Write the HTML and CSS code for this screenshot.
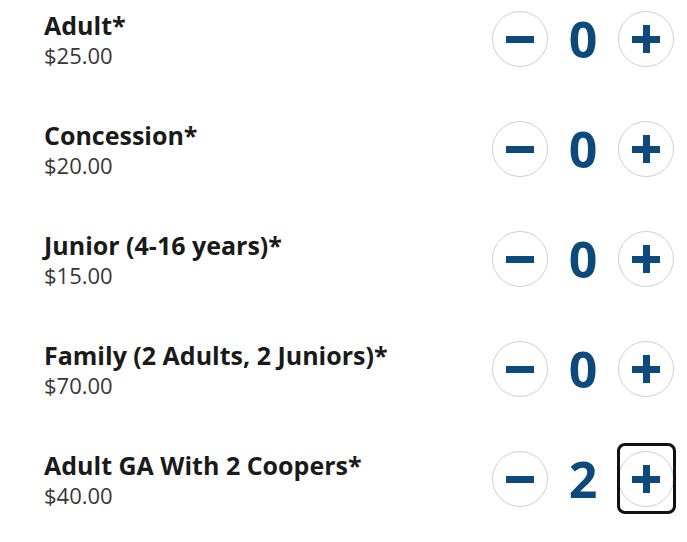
FILE: index.html
```html
<!DOCTYPE html>
<html>
<head>
<meta charset="utf-8">
<link rel="stylesheet" href="styles.css">
</head>
<body>
<div class="list">
  <div class="row">
    <div class="info"><div class="name">Adult*</div><div class="price">$25.00</div></div>
    <div class="stepper">
      <button class="btn"><span class="minus"></span></button>
      <span class="qty">0</span>
      <span class="slot"><button class="btn"><span class="plus"></span></button></span>
    </div>
  </div>
  <div class="row">
    <div class="info"><div class="name">Concession*</div><div class="price">$20.00</div></div>
    <div class="stepper">
      <button class="btn"><span class="minus"></span></button>
      <span class="qty">0</span>
      <span class="slot"><button class="btn"><span class="plus"></span></button></span>
    </div>
  </div>
  <div class="row">
    <div class="info"><div class="name">Junior (4-16 years)*</div><div class="price">$15.00</div></div>
    <div class="stepper">
      <button class="btn"><span class="minus"></span></button>
      <span class="qty">0</span>
      <span class="slot"><button class="btn"><span class="plus"></span></button></span>
    </div>
  </div>
  <div class="row">
    <div class="info"><div class="name">Family (2 Adults, 2 Juniors)*</div><div class="price">$70.00</div></div>
    <div class="stepper">
      <button class="btn"><span class="minus"></span></button>
      <span class="qty">0</span>
      <span class="slot"><button class="btn"><span class="plus"></span></button></span>
    </div>
  </div>
  <div class="row">
    <div class="info"><div class="name">Adult GA With 2 Coopers*</div><div class="price">$40.00</div></div>
    <div class="stepper">
      <button class="btn"><span class="minus"></span></button>
      <span class="qty">2</span>
      <span class="slot"><button class="btn"><span class="plus"></span></button><span class="ring"></span></span>
    </div>
  </div>
</div>
</body>
</html>
```
FILE: styles.css
```css
html, body {
  margin: 0;
  padding: 0;
  background: #fff;
}
body {
  font-family: "Open Sans", "Liberation Sans", sans-serif;
  min-height: 542px;
}
.list {
  padding: 9px 13px 30px 44px;
  display: flex;
  flex-direction: column;
  gap: 50px;
}
.row {
  display: flex;
  align-items: center;
  justify-content: space-between;
  height: 60px;
}
.name {
  font-size: 25px;
  font-weight: 700;
  line-height: 32px;
  color: #1a1a1a;
}
.price {
  font-size: 22px;
  line-height: 28px;
  color: #383838;
}
.stepper {
  display: flex;
  align-items: center;
}
.slot {
  position: relative;
  display: flex;
}
.btn {
  width: 56px;
  height: 56px;
  border: 1px solid #cfcfcf;
  border-radius: 50%;
  background: #fff;
  padding: 0;
  display: flex;
  align-items: center;
  justify-content: center;
}
.qty {
  width: 70px;
  text-align: center;
  font-size: 50px;
  font-weight: 700;
  line-height: 56px;
  color: #0c4a7b;
}
.minus {
  width: 28px;
  height: 7px;
  background: #0c4a7b;
}
.plus {
  position: relative;
  width: 28px;
  height: 28px;
}
.plus::before, .plus::after {
  content: "";
  position: absolute;
  background: #0c4a7b;
}
.plus::before {
  left: 0;
  top: 10.5px;
  width: 28px;
  height: 7px;
}
.plus::after {
  top: 0;
  left: 10.5px;
  width: 7px;
  height: 28px;
}
.ring {
  position: absolute;
  top: -8px;
  bottom: -7px;
  left: -1px;
  right: -2px;
  border: 3px solid #111;
  border-radius: 8px;
}
```
